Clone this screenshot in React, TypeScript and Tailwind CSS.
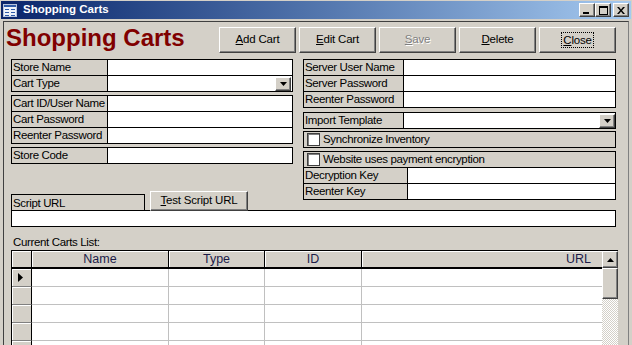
import React from "react";

const font = "font-['Liberation_Sans',Arial,sans-serif]";

const raised =
  "border border-t-white border-l-white border-r-[#404040] border-b-[#404040] shadow-[inset_-1px_-1px_0_#808080] bg-[#d4d0c8]";

function CaptionButton({ kind }: { kind: "min" | "max" | "close" }) {
  return (
    <div className={`flex h-[14px] w-[16px] items-center justify-center ${raised}`}>
      {kind === "min" && (
        <svg width="8" height="7" viewBox="0 0 8 7">
          <rect x="0" y="5" width="6" height="2" fill="#000" />
        </svg>
      )}
      {kind === "max" && (
        <svg width="9" height="9" viewBox="0 0 9 9">
          <rect x="0.5" y="0.5" width="8" height="8" fill="none" stroke="#000" />
          <rect x="0" y="0" width="9" height="2" fill="#000" />
        </svg>
      )}
      {kind === "close" && (
        <svg width="8" height="7" viewBox="0 0 8 7">
          <path d="M0 0h2l2 2.5L6 0h2L5 3.5 8 7H6L4 4.5 2 7H0l3-3.5z" fill="#000" />
        </svg>
      )}
    </div>
  );
}

function TitleBar() {
  return (
    <div className="flex h-[18px] items-center bg-linear-to-r from-[#0a246a] to-[#a6caf0] pl-[2px] pr-[2px]">
      <svg width="14" height="13" viewBox="0 0 14 13">
        <rect x="0.5" y="0.5" width="13" height="12" fill="#eef2fa" stroke="#b8c4dc" />
        <rect x="1" y="1" width="12" height="2" fill="#2e5aa8" />
        <rect x="2" y="5" width="4" height="1" fill="#2e5aa8" />
        <rect x="8" y="5" width="4" height="1" fill="#2e5aa8" />
        <rect x="2" y="8" width="4" height="1" fill="#2e5aa8" />
        <rect x="8" y="8" width="4" height="1" fill="#2e5aa8" />
        <rect x="2" y="11" width="4" height="1" fill="#2e5aa8" />
        <rect x="8" y="11" width="4" height="1" fill="#2e5aa8" />
      </svg>
      <span className="ml-[6px] text-[11.5px] font-bold tracking-normal text-white">Shopping Carts</span>
      <div className="ml-auto flex">
        <CaptionButton kind="min" />
        <CaptionButton kind="max" />
        <div className="ml-[2px]">
          <CaptionButton kind="close" />
        </div>
      </div>
    </div>
  );
}

function ToolButton({
  hot,
  rest,
  disabled,
  focus,
}: {
  hot: string;
  rest: string;
  disabled?: boolean;
  focus?: boolean;
}) {
  const text = (
    <span>
      <span className="underline">{hot}</span>
      {rest}
    </span>
  );
  return (
    <div
      className={`flex h-[26px] w-[77px] items-center justify-center text-[11.5px] tracking-[-0.2px] ${raised} ${
        disabled ? "text-[#808080] [text-shadow:1px_1px_0_#fff]" : ""
      }`}
    >
      {focus ? <span className="border border-dotted border-black px-[1px] leading-[14px]">{text}</span> : text}
    </div>
  );
}

function Drop({ right = "" }: { right?: string }) {
  return (
    <div className={`mt-[1px] flex h-[14px] w-[16px] items-center justify-center ${raised} ${right}`}>
      <svg width="7" height="4" viewBox="0 0 7 4">
        <path d="M0 0h7L3.5 4z" fill="#000" />
      </svg>
    </div>
  );
}

function Row({
  label,
  lw,
  first,
  dropdown,
  dropRight,
}: {
  label: string;
  lw: string;
  first?: boolean;
  dropdown?: boolean;
  dropRight?: string;
}) {
  return (
    <div className={`box-content flex h-[15px] ${first ? "" : "border-t border-black"}`}>
      <div
        className={`${lw} shrink-0 overflow-hidden whitespace-nowrap border-r border-black bg-[#d4d0c8] pl-[1px] leading-[15px]`}
      >
        {label}
      </div>
      <div className="flex flex-1 justify-end bg-white">{dropdown && <Drop right={dropRight} />}</div>
    </div>
  );
}

function Check() {
  return (
    <div className="h-[13px] w-[13px] shrink-0 border border-[#404040] bg-white shadow-[inset_1px_1px_0_#808080]" />
  );
}

function CheckRow({ label, first }: { label: string; first?: boolean }) {
  return (
    <div
      className={`box-content flex h-[15px] items-center gap-[3px] bg-[#d4d0c8] pl-[3px] leading-[15px] ${
        first ? "" : "border-t border-black"
      }`}
    >
      <Check />
      <span>{label}</span>
    </div>
  );
}

const rows = [0, 1, 2, 3, 4];

function CartsGrid() {
  return (
    <div className="mt-[1px] flex w-[607px] border-l border-t border-black">
      <div className="flex-1">
        <div className="flex h-[18px] border-b-2 border-black bg-[#d4d0c8] text-[12.5px] leading-[16px] tracking-normal text-[#1c1c48]">
          <div className="w-[20px] border-r border-black shadow-[inset_1px_1px_0_#fff]" />
          <div className="w-[137px] border-r border-black text-center shadow-[inset_1px_1px_0_#fff]">Name</div>
          <div className="w-[96px] border-r border-black text-center shadow-[inset_1px_1px_0_#fff]">Type</div>
          <div className="w-[97px] border-r border-black text-center shadow-[inset_1px_1px_0_#fff]">ID</div>
          <div className="flex-1 pr-[11px] text-right shadow-[inset_1px_1px_0_#fff]">URL</div>
        </div>
        {rows.map((r) => (
          <div key={r} className="flex h-[18px]">
            <div className="flex w-[20px] items-center border-b border-r border-b-[#808080] border-r-black bg-[#d4d0c8] pl-[6px] shadow-[inset_1px_1px_0_#fff]">
              {r === 0 && (
                <svg width="5" height="9" viewBox="0 0 5 9">
                  <path d="M0 0l5 4.5L0 9z" fill="#000" />
                </svg>
              )}
            </div>
            <div className="w-[137px] border-b border-r border-[#c0c0c0] bg-white" />
            <div className="w-[96px] border-b border-r border-[#c0c0c0] bg-white" />
            <div className="w-[97px] border-b border-r border-[#c0c0c0] bg-white" />
            <div className="flex-1 border-b border-[#c0c0c0] bg-white" />
          </div>
        ))}
      </div>
      <div className="flex w-[16px] flex-col">
        <div className={`flex h-[17px] items-center justify-center ${raised}`}>
          <svg width="7" height="4" viewBox="0 0 7 4">
            <path d="M3.5 0L7 4H0z" fill="#000" />
          </svg>
        </div>
        <div className={`h-[31px] ${raised}`} />
        <div className="h-[80px] bg-[image:repeating-conic-gradient(#d4d0c8_0%_25%,#ffffff_0%_50%)] bg-[length:2px_2px]" />
      </div>
    </div>
  );
}

export default function App() {
  return (
    <div className={`${font} h-[345px] w-[632px] overflow-hidden bg-[#d4d0c8] px-[1px] pt-[1px] text-[11.5px] tracking-[-0.35px] text-black`}>
      <TitleBar />
      <div className="mx-[2px] mt-[2px] h-[400px] border-l border-r border-t border-l-[#404040] border-r-[#808080] border-t-[#404040]">
        {/* header: big title and toolbar */}
        <div className="flex pt-[5px]">
          <div className="-mt-[1px] w-[215px] pl-[2px] text-[24px] font-bold leading-[24px] tracking-normal text-[#800000]">
            Shopping Carts
          </div>
          <div className="flex gap-[3px]">
            <ToolButton hot="A" rest="dd Cart" />
            <ToolButton hot="E" rest="dit Cart" />
            <ToolButton hot="S" rest="ave" disabled />
            <ToolButton hot="D" rest="elete" />
            <ToolButton hot="C" rest="lose" focus />
          </div>
        </div>

        <div className="pl-[7px]">
          <div className="mt-[6px] flex items-start gap-[10px]">
            {/* left column */}
            <div className="flex w-[282px] flex-col">
              <div className="border border-black">
                <Row label="Store Name" lw="w-[96px]" first />
                <Row label="Cart Type" lw="w-[96px]" dropdown dropRight="mr-[1px]" />
              </div>
              <div className="mt-[3px] border border-black">
                <Row label="Cart ID/User Name" lw="w-[96px]" first />
                <Row label="Cart Password" lw="w-[96px]" />
                <Row label="Reenter Password" lw="w-[96px]" />
              </div>
              <div className="mt-[3px] border border-black">
                <Row label="Store Code" lw="w-[96px]" first />
              </div>
              <div className="mt-[27px] flex items-end gap-[5px]">
                <div className="h-[17px] w-[134px] border border-black bg-[#d4d0c8] pl-[1px] leading-[16px]">
                  Script URL
                </div>
                <div className={`flex h-[20px] w-[98px] items-center justify-center tracking-[-0.2px] ${raised}`}>
                  <span>
                    <span className="underline">T</span>est Script URL
                  </span>
                </div>
              </div>
            </div>

            {/* right column */}
            <div className="flex w-[313px] flex-col">
              <div className="border border-black">
                <Row label="Server User Name" lw="w-[100px]" first />
                <Row label="Server Password" lw="w-[100px]" />
                <Row label="Reenter Password" lw="w-[100px]" />
              </div>
              <div className="mt-[4px] border border-black">
                <Row label="Import Template" lw="w-[100px]" first dropdown />
              </div>
              <div className="mt-[2px] border border-black">
                <CheckRow label="Synchronize Inventory" first />
              </div>
              <div className="mt-[3px] border border-black">
                <CheckRow label="Website uses payment encryption" first />
                <Row label="Decryption Key" lw="w-[104px]" />
                <Row label="Reenter Key" lw="w-[104px]" />
              </div>
            </div>
          </div>

          <div className="-mt-[1px] h-[17px] w-[605px] border border-black bg-white" />

          <div className="mt-[8px] h-[14px] pl-[2px] leading-[14px]">Current Carts List:</div>
          <CartsGrid />
        </div>
      </div>
    </div>
  );
}
